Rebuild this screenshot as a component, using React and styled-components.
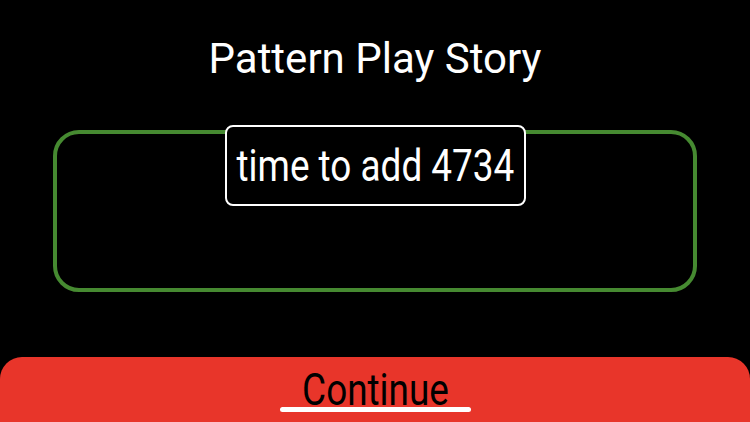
import React from "react";
import styled, { createGlobalStyle } from "styled-components";

const GlobalStyle = createGlobalStyle`
  html, body {
    margin: 0;
    padding: 0;
    background: #000;
    overflow: hidden;
  }
  * { box-sizing: border-box; }
`;

const Screen = styled.div`
  width: 750px;
  height: 422px;
  background: #000;
  display: flex;
  flex-direction: column;
  align-items: stretch;
  font-family: Roboto, "Liberation Sans", sans-serif;
  overflow: hidden;

  & > * { flex-shrink: 0; }
`;

const Title = styled.h1`
  margin: 0;
  padding-top: 38px;
  font-size: 42px;
  font-weight: 400;
  line-height: 42px;
  color: #fff;
  text-align: center;
`;

const StoryFrame = styled.section`
  margin: 50px 53px 0;
  height: 162px;
  border: 4px solid #468a31;
  border-radius: 26px;
  display: flex;
  justify-content: center;
  align-items: flex-start;
`;

const Prompt = styled.div`
  margin-top: -9px;
  width: 301px;
  height: 81px;
  border: 2.5px solid #fff;
  border-radius: 8px;
  background: #000;
  display: flex;
  align-items: center;
  justify-content: center;
`;

const Squeezed = styled.span`
  display: inline-block;
  white-space: nowrap;
  font-size: ${(p) => p.$size}px;
  color: ${(p) => p.$color};
  line-height: 1;
  transform: scaleX(0.82);
`;

const ContinueButton = styled.button`
  position: relative;
  margin-top: 65px;
  height: 90px;
  border: none;
  border-radius: 22px;
  background: #e8352a;
  display: flex;
  justify-content: center;
  align-items: flex-start;
  padding: 10px 0 0;
  font-family: inherit;
  cursor: pointer;
`;

const HomeIndicator = styled.div`
  position: absolute;
  left: 280px;
  top: 50px;
  width: 191px;
  height: 5px;
  border-radius: 3px;
  background: #fff;
`;

export default function App() {
  return (
    <>
      <GlobalStyle />
      <Screen>
        <Title>Pattern Play Story</Title>
        <StoryFrame>
          <Prompt>
            <Squeezed $size={45} $color="#fff">time to add 4734</Squeezed>
          </Prompt>
        </StoryFrame>
        <ContinueButton>
          <Squeezed $size={45} $color="#000">Continue</Squeezed>
          <HomeIndicator />
        </ContinueButton>
      </Screen>
    </>
  );
}
